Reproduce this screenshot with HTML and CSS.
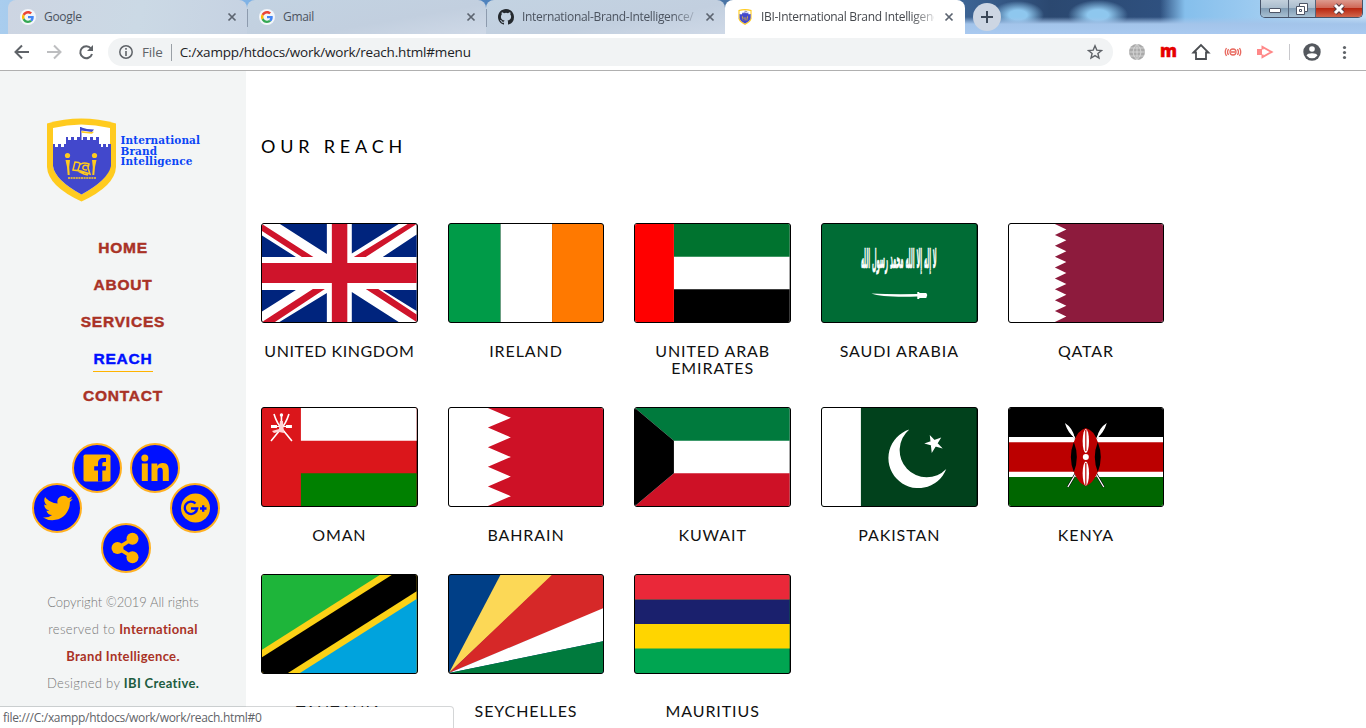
FILE: index.html
```html
<!DOCTYPE html>
<html lang="en">
<head>
<meta charset="utf-8">
<title>IBI-International Brand Intelligence</title>
<link rel="stylesheet" href="styles.css">
</head>
<body>
<svg class="defs" width="0" height="0">
  <symbol id="google" viewBox="0 0 48 48"><path fill="#ea4335" d="M24 9.500c3.500 0 6.700 1.200 9.200 3.600l6.900-6.900C35.900 2.400 30.500 0 24 0 14.600 0 6.500 5.400 2.600 13.200l8 6.200C12.400 13.700 17.700 9.500 24 9.500z"/><path fill="#4285f4" d="M47 24.500c0-1.600-.2-3.100-.4-4.500H24v9h12.900c-.6 3-2.200 5.500-4.700 7.200l7.700 6C44.400 38 47 31.800 47 24.500z"/><path fill="#fbbc05" d="M10.500 28.600a14.500 14.500 0 0 1 0-9.200l-8-6.200a24 24 0 0 0 0 21.600z"/><path fill="#34a853" d="M24 48c6.500 0 11.900-2.100 15.900-5.800l-7.700-6c-2.200 1.500-4.900 2.300-8.200 2.300-6.300 0-11.600-4.200-13.500-9.900l-8 6.200C6.500 42.600 14.600 48 24 48z"/></symbol>
  <symbol id="close" viewBox="0 0 10 10"><path d="M1.500 1.500l7 7M8.500 1.500l-7 7" stroke="currentColor" stroke-width="1.700"/></symbol>
  <symbol id="crest" viewBox="0 0 71 84">
    <path fill="#ffcb1f" d="M1 5.500Q35-4.500 70 5.500V49Q69 68 35.500 83.500Q2 68 1 49z"/>
    <path fill="#fff" d="M7 10Q35 3 64 10V48Q62 62 35.500 76.500Q9 62 7 48z"/>
    <path fill="#4248cc" d="M7 26h2v3h3v-3h3v3h3v-3h2v-7h2v3h3v-3h3v3h3v-3h3v3h3v-3h4v3h3v-3h3v3h3v-3h3v7h2v3h2v-3h3v3h2v-3h3V48Q62 62 35.500 76.500Q9 62 7 48z"/>
    <path fill="#4248cc" d="M34 9h1.500v13H34zM35.500 9.500l5.500 1.500 7 .5-2 2.500-10.500-1.500z"/>
    <path fill="#ffcb1f" d="M35.500 13l7 1 5.500-.2-2 2-10.500-1z"/>
    <g fill="#ffcb1f"><circle cx="21.500" cy="37.500" r="2.600"/><circle cx="48.500" cy="37.500" r="2.600"/><path d="M19.500 42h4.500l-.8 7 .5 8h-2l-.7-8zM50.500 42H46l.8 7-.5 8h2l.7-8z"/></g>
    <path fill="none" stroke="#ffcb1f" stroke-width="1.500" d="M29 44q4 0 6 2 3-2 8 0l-1 4 2 6-9-3-8-1zM34 46l-2 6M42 48q-4-2-5 1t4 3M32 53l6 3 4 1"/>
    <path stroke="#ffcb1f" stroke-width="1.300" stroke-dasharray="2 .6" d="M22 60h28"/>
  </symbol>
</svg>

<header class="browser">
  <div class="tabstrip">
    <div class="tab">
      <span class="favicon"><svg width="12" height="12"><use href="#google"/></svg></span>
      <span class="tab-title">Google</span>
      <svg class="close" width="10" height="10"><use href="#close"/></svg>
    </div>
    <div class="tab divided">
      <span class="favicon"><svg width="12" height="12"><use href="#google"/></svg></span>
      <span class="tab-title">Gmail</span>
      <svg class="close" width="10" height="10"><use href="#close"/></svg>
    </div>
    <div class="tab divided">
      <svg class="github" width="16" height="16" viewBox="0 0 16 16"><path fill="#24292e" d="M8 0C3.580 0 0 3.580 0 8c0 3.540 2.290 6.530 5.470 7.590.4.070.55-.17.55-.38 0-.19-.01-.82-.01-1.490-2.010.37-2.530-.49-2.690-.94-.09-.23-.48-.94-.82-1.130-.28-.15-.68-.52-.01-.53.63-.01 1.080.58 1.230.82.720 1.210 1.870.87 2.330.66.070-.52.28-.87.51-1.070-1.780-.2-3.640-.89-3.640-3.950 0-.87.31-1.590.82-2.150-.08-.2-.36-1.020.08-2.120 0 0 .67-.21 2.200.82a7.600 7.600 0 0 1 4 0c1.530-1.040 2.200-.82 2.200-.82.44 1.100.16 1.920.08 2.120.51.56.82 1.270.82 2.150 0 3.070-1.870 3.750-3.650 3.950.29.25.54.73.54 1.480 0 1.070-.01 1.930-.01 2.200 0 .21.15.46.55.38A8 8 0 0 0 16 8c0-4.420-3.580-8-8-8z"/></svg>
      <span class="tab-title fade">International-Brand-Intelligence/</span>
      <svg class="close" width="10" height="10"><use href="#close"/></svg>
    </div>
    <div class="tab active">
      <svg class="crest-icon" width="16" height="16"><use href="#crest"/></svg>
      <span class="tab-title fade">IBI-International Brand Intelligenc</span>
      <svg class="close" width="10" height="10"><use href="#close"/></svg>
    </div>
    <div class="new-tab"><svg width="12" height="12" viewBox="0 0 12 12"><path d="M6 0v12M0 6h12" stroke="#3c4858" stroke-width="2"/></svg></div>
    <div class="window-buttons">
      <div class="win min"><svg width="14" height="12" viewBox="0 0 14 12"><rect x="1.500" y="5.500" width="11" height="4" rx=".5" fill="#fff" stroke="#4d5566"/></svg></div>
      <div class="win max"><svg width="14" height="14" viewBox="0 0 14 14"><path fill="#fff" stroke="#4d5566" d="M4.500 1.500h8v8h-3v3h-8v-8h3z"/><path d="M4.500 7.500h2v2h-2zM4.500 4.500h5v5" fill="none" stroke="#4d5566"/></svg></div>
      <div class="win quit"><svg width="14" height="12" viewBox="0 0 14 12"><path d="M3 2l8 8M11 2l-8 8" stroke="#553c44" stroke-width="5"/><path d="M3 2l8 8M11 2l-8 8" stroke="#fff" stroke-width="3"/></svg></div>
    </div>
  </div>
  <div class="toolbar">
    <svg class="nav-icons" width="96" height="20" viewBox="0 0 96 20" fill="none" stroke-width="2">
      <path stroke="#5f6368" d="M29 10H16M22 3.500L15.500 10l6.500 6.500"/>
      <path stroke="#bdbec0" d="M47 10h13M54 3.500l6.500 6.500-6.500 6.500"/>
      <path stroke="#5f6368" d="M91 6.500A6 6 0 1 0 92 12"/><path fill="#5f6368" d="M93 3v6h-6z"/>
    </svg>
    <div class="omnibox">
      <svg width="16" height="16" viewBox="0 0 16 16"><circle cx="8" cy="8" r="6.200" fill="none" stroke="#5f6368" stroke-width="1.500"/><path d="M8 7v5M8 4v1.700" stroke="#5f6368" stroke-width="1.600"/></svg>
      <span class="scheme">File</span>
      <span class="url">C:/xampp/htdocs/work/work/reach.html#menu</span>
      <svg class="star" width="16" height="16" viewBox="0 0 16 16"><path d="M8 1.800l1.800 4.300 4.700.4-3.600 3 1.100 4.600-4-2.500-4 2.500 1.100-4.600-3.600-3 4.700-.4z" fill="none" stroke="#5f6368" stroke-width="1.400"/></svg>
    </div>
    <svg class="extensions" width="236" height="24" viewBox="1120 0 236 24">
      <circle cx="1137" cy="12" r="8" fill="#aaa"/><path d="M1129 12h16M1130 8h14M1130 16h14M1137 4v16M1137 4q-8 8 0 16M1137 4q8 8 0 16" fill="none" stroke="#ddd" stroke-width=".8"/>
      <text class="m-logo" x="1160" y="16.500" textLength="17" lengthAdjust="spacingAndGlyphs">m</text>
      <path d="M1193.500 12.500l7.500-7.500 7.500 7.500h-2.500v6.500h-10v-6.500z" fill="none" stroke="#4a4d51" stroke-width="1.800"/>
      <g fill="none" stroke="#e8695f" stroke-width="1.300"><circle cx="1233" cy="12" r="3"/><path d="M1231 12h4M1228.500 9q-2 3 0 6M1226.500 8q-2.500 4 0 8M1237.500 9q2 3 0 6M1239.500 8q2.500 4 0 8"/></g>
      <path d="M1257 9h5v6h-5z" fill="#f88"/><path d="M1262.500 9.500V7l9 5-9 5v-2.500" fill="none" stroke="#f88" stroke-width="2"/>
      <path d="M1289.500 4v16" stroke="#c8c8cc"/>
      <circle cx="1312" cy="12" r="8.700" fill="#54585e"/><circle cx="1312" cy="9" r="2.800" fill="#fff"/><path d="M1306.500 15.500q1-2.300 5.500-2.300t5.500 2.300q-2 2.700-5.500 2.700t-5.500-2.700z" fill="#fff"/>
      <g fill="#5f6368"><circle cx="1344.500" cy="7.500" r="1.600"/><circle cx="1344.500" cy="12.500" r="1.600"/><circle cx="1344.500" cy="17.500" r="1.600"/></g>
    </svg>
  </div>
</header>

<div class="page">
  <aside class="sidebar">
    <div class="logo">
      <svg width="71" height="84"><use href="#crest"/></svg>
      <div class="logo-text">International<br>Brand<br>Intelligence</div>
    </div>
    <nav class="menu">
      <a>HOME</a>
      <a>ABOUT</a>
      <a>SERVICES</a>
      <a class="current">REACH</a>
      <a>CONTACT</a>
    </nav>
    <div class="social">
      <div class="social-row upper">
        <span class="bubble"><svg width="28" height="28" viewBox="0 0 28 28"><rect x=".5" y=".5" width="27" height="27" rx="1.800" fill="#ffb300"/><path d="M15 27.500V16.500h-3.800v-4.300H15V9.500c0-3.600 2-5.500 5.500-5.500H23v4h-2c-1.300 0-1.700.7-1.700 1.900v2.300h3.800l-.5 4.300h-3.300v11z" fill="#0010ff"/></svg></span>
        <span class="bubble"><svg width="28" height="28" viewBox="0 0 28 28" fill="#ffb300"><circle cx="3.800" cy="4" r="3.500"/><path d="M.8 9.500h6V27h-6zM10.500 9.500h5.800V12c1-1.800 3-2.900 5.500-2.900 5 0 6 3.300 6 7.700V27h-6v-9c0-2.300-.2-4.200-2.700-4.200S16.500 15.500 16.500 18v9h-6z"/></svg></span>
      </div>
      <div class="social-row middle">
        <span class="bubble"><svg class="bird" width="30" height="30" viewBox="0 0 24 24"><path fill="#ffb300" d="M23.900 4.600a10 10 0 0 1-2.800.8 4.900 4.900 0 0 0 2.100-2.700c-1 .6-2 1-3.100 1.200a4.900 4.900 0 0 0-8.400 4.500C7.700 8.200 4 6.300 1.700 3.200A4.900 4.900 0 0 0 3.200 9.700a4.900 4.900 0 0 1-2.200-.6 4.900 4.900 0 0 0 3.900 4.900 5 5 0 0 1-2.200.1 4.900 4.900 0 0 0 4.600 3.400A9.900 9.900 0 0 1 0 19.500 14 14 0 0 0 7.500 21.700c9.100 0 14-7.500 14-14v-.6a10 10 0 0 0 2.400-2.500z"/></svg></span>
        <span class="bubble"><svg width="30" height="30" viewBox="0 0 30 30"><circle cx="15.500" cy="15" r="14.500" fill="#ffb300"/><path d="M15.500 10.500a6.200 6.200 0 1 0 1.700 5H11M20 15.500h6.500M23.200 12.200v6.500" fill="none" stroke="#0010ff" stroke-width="2.300"/></svg></span>
      </div>
      <div class="social-row lower">
        <span class="bubble"><svg class="share" width="28" height="32" viewBox="0 0 28 32"><path d="M22 6.500L7 16l15 9.500" fill="none" stroke="#ffb300" stroke-width="3.800"/><g fill="#ffb300"><circle cx="6.500" cy="16" r="6"/><circle cx="21.500" cy="6.700" r="6"/><circle cx="21.500" cy="25.300" r="6"/></g></svg></span>
      </div>
    </div>
    <p class="copyright">
      <span>Copyright ©2019 All rights</span>
      <span class="wide">reserved to <b>International</b></span>
      <span class="wide"><b>Brand Intelligence.</b></span>
      <span class="wide">Designed by <b class="green">IBI Creative.</b></span>
    </p>
  </aside>

  <main class="content">
    <h2>OUR REACH</h2>
    <div class="flags">
      <figure><svg viewBox="0 0 155 98" preserveAspectRatio="none"><rect width="155" height="98" fill="#fff"/><path fill="#00247d" d="M18 0H65V30zM0 11.500L34 33H0zM90 0h47L90 29.500zM155 10.500V33h-34zM0 66h34L0 87.500zM65 69v29H17.500zM90 68l47 30H90zM121 66h34v21z"/><path fill="#cf142b" d="M0 0v7l40 26h11.500zM146 0h9l-51 33H92zM51 65h12L13 98H0zM104 65h12.500L155 90.500V98zM70 0h15.500v98H70zM0 39h155v20H0z"/></svg><figcaption>UNITED KINGDOM</figcaption></figure>
      <figure><svg viewBox="0 0 155 98" preserveAspectRatio="none"><path fill="#009b48" d="M0 0h51.700v98H0z"/><path fill="#fff" d="M51.700 0h51.600v98H51.700z"/><path fill="#ff7900" d="M103.300 0H155v98h-51.700z"/></svg><figcaption>IRELAND</figcaption></figure>
      <figure><svg viewBox="0 0 155 98" preserveAspectRatio="none"><rect width="155" height="98" fill="#fff"/><path fill="#00732f" d="M39 0h116v32.700H39z"/><path fill="#000" d="M39 65.300h116V98H39z"/><path fill="#f00" d="M0 0h39v98H0z"/></svg><figcaption>UNITED ARAB EMIRATES</figcaption></figure>
      <figure><svg viewBox="0 0 155 98" preserveAspectRatio="none"><rect width="155" height="98" fill="#006c35"/><text class="shahada" transform="translate(39 44) scale(1 1.850)" textLength="76" lengthAdjust="spacingAndGlyphs">لا إله إلا الله محمد رسول الله</text><path d="M49.500 69.500q20 1 46 .5v-2h2v1h7l1 2-1 3h-7v1h-2v-2.500q-35 1-46-3z" fill="#fff"/></svg><figcaption>SAUDI ARABIA</figcaption></figure>
      <figure><svg viewBox="0 0 155 98" preserveAspectRatio="none"><rect width="155" height="98" fill="#fff"/><path fill="#8d1b3d" d="M155 0H46L57.500 5.440 46 10.900 57.500 16.300 46 21.800 57.500 27.200 46 32.700 57.500 38.100 46 43.600 57.500 49 46 54.400 57.500 59.900 46 65.300 57.500 70.800 46 76.200 57.500 81.700 46 87.100 57.500 92.600 46 98H155z"/></svg><figcaption>QATAR</figcaption></figure>

      <figure><svg viewBox="0 0 155 98" preserveAspectRatio="none"><rect width="155" height="98" fill="#db161b"/><path fill="#fff" d="M39 0h116v32.700H39z"/><path fill="#008000" d="M39 65.300h116V98H39z"/><g fill="none" stroke="#fff" stroke-width="1.600"><path d="M12 6q3 10 9 16l9 11M27 6q-3 10-9 16L9 33M19.500 8v8"/><path d="M9 18.500h6M24 18.500h6" stroke-width="2.800"/><path d="M13 18.500h13" stroke-width="1"/></g><circle cx="19.500" cy="7" r="1.700" fill="#fff"/><path d="M18 13h3l1 12-5-1-5 1-2-2 7-2z" fill="#ffd3d3"/></svg><figcaption>OMAN</figcaption></figure>
      <figure><svg viewBox="0 0 155 98" preserveAspectRatio="none"><rect width="155" height="98" fill="#fff"/><path fill="#ce1126" d="M155 0H39L62 9.800 39 19.600 62 29.400 39 39.200 62 49 39 58.800 62 68.600 39 78.400 62 88.200 39 98H155z"/></svg><figcaption>BAHRAIN</figcaption></figure>
      <figure><svg viewBox="0 0 155 98" preserveAspectRatio="none"><rect width="155" height="98" fill="#fff"/><path fill="#007a3d" d="M0 0h155v32.700H39z"/><path fill="#ce1126" d="M39 65.300h116V98H0z"/><path fill="#000" d="M0 0l39 32.700v32.600L0 98z"/></svg><figcaption>KUWAIT</figcaption></figure>
      <figure><svg viewBox="0 0 155 98" preserveAspectRatio="none"><rect width="155" height="98" fill="#01411c"/><path fill="#fff" d="M0 0h39v98H0zM87.500 21.500A30 30 0 1 0 124.500 61 27.100 27.100 0 1 1 87.500 21.500zM108 27L121 40.500 102.500 35.500 119.500 29.500 110 45z"/></svg><figcaption>PAKISTAN</figcaption></figure>
      <figure><svg viewBox="0 0 155 98" preserveAspectRatio="none"><rect width="155" height="98" fill="#fff"/><path d="M0 0h155v29H0z"/><path fill="#b00" d="M0 34.300h155v29.500H0z"/><path fill="#060" d="M0 69h155v29H0z"/><path d="M63 24l32 55M91 24L59 79" stroke="#000" stroke-width="2.400"/><path d="M61 22l34 57M93 22L59 79" stroke="#fff" stroke-width="1.300"/><path fill="#fff" d="M56 15q8 5 10 15-7-5-10-15zM98 15q-8 5-10 15 7-5 10-15z"/><path fill="#b00" d="M77 20q8 2 12 14 7 15 0 30-5 12-12 14-7-2-12-14-7-15 0-30 4-12 12-14z"/><path d="M65 34q6 15 0 30-6-15 0-30zM89 34q-6 15 0 30 6-15 0-30z"/><g fill="#fff"><ellipse cx="77" cy="33" rx="3.200" ry="12"/><ellipse cx="77" cy="65.500" rx="3.200" ry="12"/><circle cx="77" cy="49" r="3"/></g><path d="M77 22v21M77 55v22" stroke="#b00" stroke-width="1.200"/></svg><figcaption>KENYA</figcaption></figure>

      <figure class="last-row"><svg viewBox="0 0 155 98" preserveAspectRatio="none"><rect width="155" height="98" fill="#fcd116"/><path fill="#1eb53a" d="M0 0h118L0 74.700z"/><path fill="#00a3dd" d="M155 24v74H38z"/><path fill="#000" d="M130 0h25v16.300L26 98H0V82.300z"/></svg><figcaption>TANZANIA</figcaption></figure>
      <figure class="last-row"><svg viewBox="0 0 155 98" preserveAspectRatio="none"><rect width="155" height="98" fill="#003f87"/><path fill="#fcd856" d="M0 98L51.500 0H104z"/><path fill="#d62828" d="M0 98L103 0h52v34z"/><path fill="#fff" d="M0 98l155-65v33z"/><path fill="#007a3d" d="M0 98l155-32v32z"/></svg><figcaption>SEYCHELLES</figcaption></figure>
      <figure class="last-row"><svg viewBox="0 0 155 98" preserveAspectRatio="none"><rect width="155" height="98" fill="#00a551"/><path fill="#ffd500" d="M0 49h155v24.500H0z"/><path fill="#1a206d" d="M0 24.500h155V49H0z"/><path fill="#ea2839" d="M0 0h155v24.500H0z"/></svg><figcaption>MAURITIUS</figcaption></figure>
    </div>
  </main>
</div>
<div class="status">file:///C:/xampp/htdocs/work/work/reach.html#0</div>
</body>
</html>
```

FILE: styles.css
```css
* { box-sizing: border-box; }
body { margin: 0; height: 728px; overflow: hidden; display: flex; flex-direction: column; position: relative; background: #fff; font-family: Lato, sans-serif; }
.defs { position: absolute; }

.browser { flex: none; height: 71px; border-bottom: 1px solid #b0b0b0; font-family: "Open Sans", sans-serif; }
.tabstrip {
  height: 34px; display: flex; padding-left: 8px;
  background:
    linear-gradient(90deg, #a9cdee, #7fb2e5 247px, #4e82bd 486px, #4a74a5 725px, #4a74a5 960px) 0 0 / 960px 34px no-repeat,
    linear-gradient(transparent 17px, #a3c4ea 24px, #a9c9f0),
    radial-gradient(ellipse 26px 14px at 1018px 15px, #8ec7ee 35%, transparent),
    radial-gradient(ellipse 30px 15px at 1098px 15px, #8ec7ee 35%, transparent),
    linear-gradient(90deg, transparent 1160px, #85bfec 1185px, #9bcaf0 1250px, #c3ddf5),
    linear-gradient(90deg, #3d6596 960px, #2b4870 1050px, #2f5180 1170px);
}
.tab { width: 239px; height: 34px; flex: none; display: flex; align-items: center; padding: 0 10px 0 12px; border-radius: 8px 8px 0 0; background: linear-gradient(100deg, #cdd5e2, #cbd9e5 55%, #c6d2e2); color: #4b535f; font-size: 12px; }
.tab.divided { background: linear-gradient(90deg, #8d9bae 0 1px, transparent 1px) 0 9px / 1px 18px no-repeat, linear-gradient(170deg, #c3d3e2, #c2cfdf 60%, #cfd9e7); }
.tab.active { width: 240px; padding-right: 11px; background: #fff; color: #45484d; }
.favicon { width: 16px; height: 16px; border-radius: 50%; background: #f3f6fa; display: flex; align-items: center; justify-content: center; }
.tab-title { flex: 1; margin: 0 8px; letter-spacing: -.3px; white-space: nowrap; line-height: 18px; }
.active .tab-title { width: 173px; flex: none; margin-right: 10px; }
.github + .tab-title { letter-spacing: -.33px; }
.fade { -webkit-mask-image: linear-gradient(90deg, #000 150px, transparent 179px); mask-image: linear-gradient(90deg, #000 150px, transparent 179px); }
.close { color: #5c6470; }
.new-tab { width: 28px; height: 28px; margin: 3px 0 0 8px; border-radius: 50%; background: #cdd6e3; display: flex; align-items: center; justify-content: center; }
.window-buttons { margin: 0 3px 0 auto; height: 18px; display: flex; border: 1px solid #465369; border-top: 0; border-radius: 0 0 5px 5px; overflow: hidden; }
.win { display: flex; align-items: center; justify-content: center; border-right: 1px solid #56647a; background: linear-gradient(#c3d0dc, #a9bccd 48%, #829db5 50%, #a7c0d2); }
.min { width: 28px; }
.max { width: 27px; }
.quit { width: 46px; border: 0; background: linear-gradient(#dd9a8e, #cf6554 48%, #b92711 50%, #d2664c); }

.toolbar { height: 36px; display: flex; align-items: center; background: #fff; }
.nav-icons { margin-right: 12px; }
.omnibox { width: 1005px; height: 28px; border-radius: 14px; background: #f1f3f4; display: flex; align-items: center; padding: 0 10px; font-size: 13.500px; color: #202124; }
.scheme { margin-left: 8px; padding-right: 8px; line-height: 17px; border-right: 1px solid #9aa0a6; color: #5f6368; letter-spacing: -.15px; }
.url { margin-left: 8px; letter-spacing: -.18px; white-space: nowrap; }
.star { margin-left: auto; }
.extensions { margin-left: 7px; }
.m-logo { font: 900 17px/1 "Open Sans", sans-serif; fill: #e60000; stroke: #e60000; stroke-width: .4px; }

.page { flex: 1; display: flex; min-height: 0; }
.sidebar { width: 246px; flex: none; background: #f3f5f5; padding-top: 47px; }
.logo { display: flex; padding-left: 46px; }
.logo-text { margin: 17px 0 0 3.500px; font: bold 10.500px/10.500px "DejaVu Serif", serif; letter-spacing: .1px; color: #0a45f5; white-space: nowrap; }
.menu { margin-top: 33px; display: flex; flex-direction: column; align-items: center; }
.menu a { height: 26px; margin-bottom: 11px; font: bold 15.500px/26px "Liberation Sans", sans-serif; letter-spacing: .8px; color: #a93226; -webkit-text-stroke: .45px; }
.menu .current { color: #0010ff; border-bottom: 1px solid #ffb300; }
.social { margin-top: 23px; }
.social-row { display: flex; padding-left: 72px; gap: 8px; }
.middle { padding-left: 32px; gap: 88px; margin-top: -10px; }
.lower { padding-left: 101px; margin-top: -10px; }
.bubble { width: 50px; height: 50px; flex: none; border-radius: 50%; border: 2px solid #ffb020; background: #0010ff; display: flex; align-items: center; justify-content: center; }
.bird { margin-left: 2px; }
.share { margin-right: 2px; }
.copyright { margin: 16px 0 0; display: flex; flex-direction: column; align-items: center; font-size: 13px; line-height: 27px; font-weight: 300; color: #777; white-space: nowrap; }
.copyright .wide { letter-spacing: .33px; }
.copyright b { font-weight: 700; color: #a93226; }
.copyright .green { color: #1d5c40; }

.content { flex: 1; padding-top: 61px; }
h2 { margin: 0 15px 63px; font-size: 18px; line-height: 28px; font-weight: 400; letter-spacing: 4.800px; color: #000; }
.flags { display: grid; grid-template-columns: repeat(6, 186.667px); }
figure { margin: 0; padding: 0 15px 30px; }
figure:nth-child(5n+1) { grid-column: 1; }
figure svg { display: block; width: 100%; height: 100px; border: 1px solid #000; border-radius: 3px; background: #000; }
figcaption { margin: 19px 0 1px; text-align: center; font-size: 16px; line-height: 17px; letter-spacing: .9px; color: #111; padding: 0 8px; }
figure:first-child figcaption { padding: 0; white-space: nowrap; letter-spacing: .55px; }
.last-row figcaption { margin-top: 28px; }
.shahada { font: bold 14px "DejaVu Sans", sans-serif; fill: #fff; stroke: #fff; stroke-width: .4px; }

.status { position: absolute; left: 0; bottom: 0; width: 454px; height: 22px; padding-left: 3px; border: solid rgba(60, 70, 75, .22); border-width: 1px 1px 0 0; border-radius: 0 4px 0 0; background: #fff; background-clip: padding-box; font: 12px/21px "Open Sans", sans-serif; letter-spacing: -.31px; color: #5f6368; }
```
